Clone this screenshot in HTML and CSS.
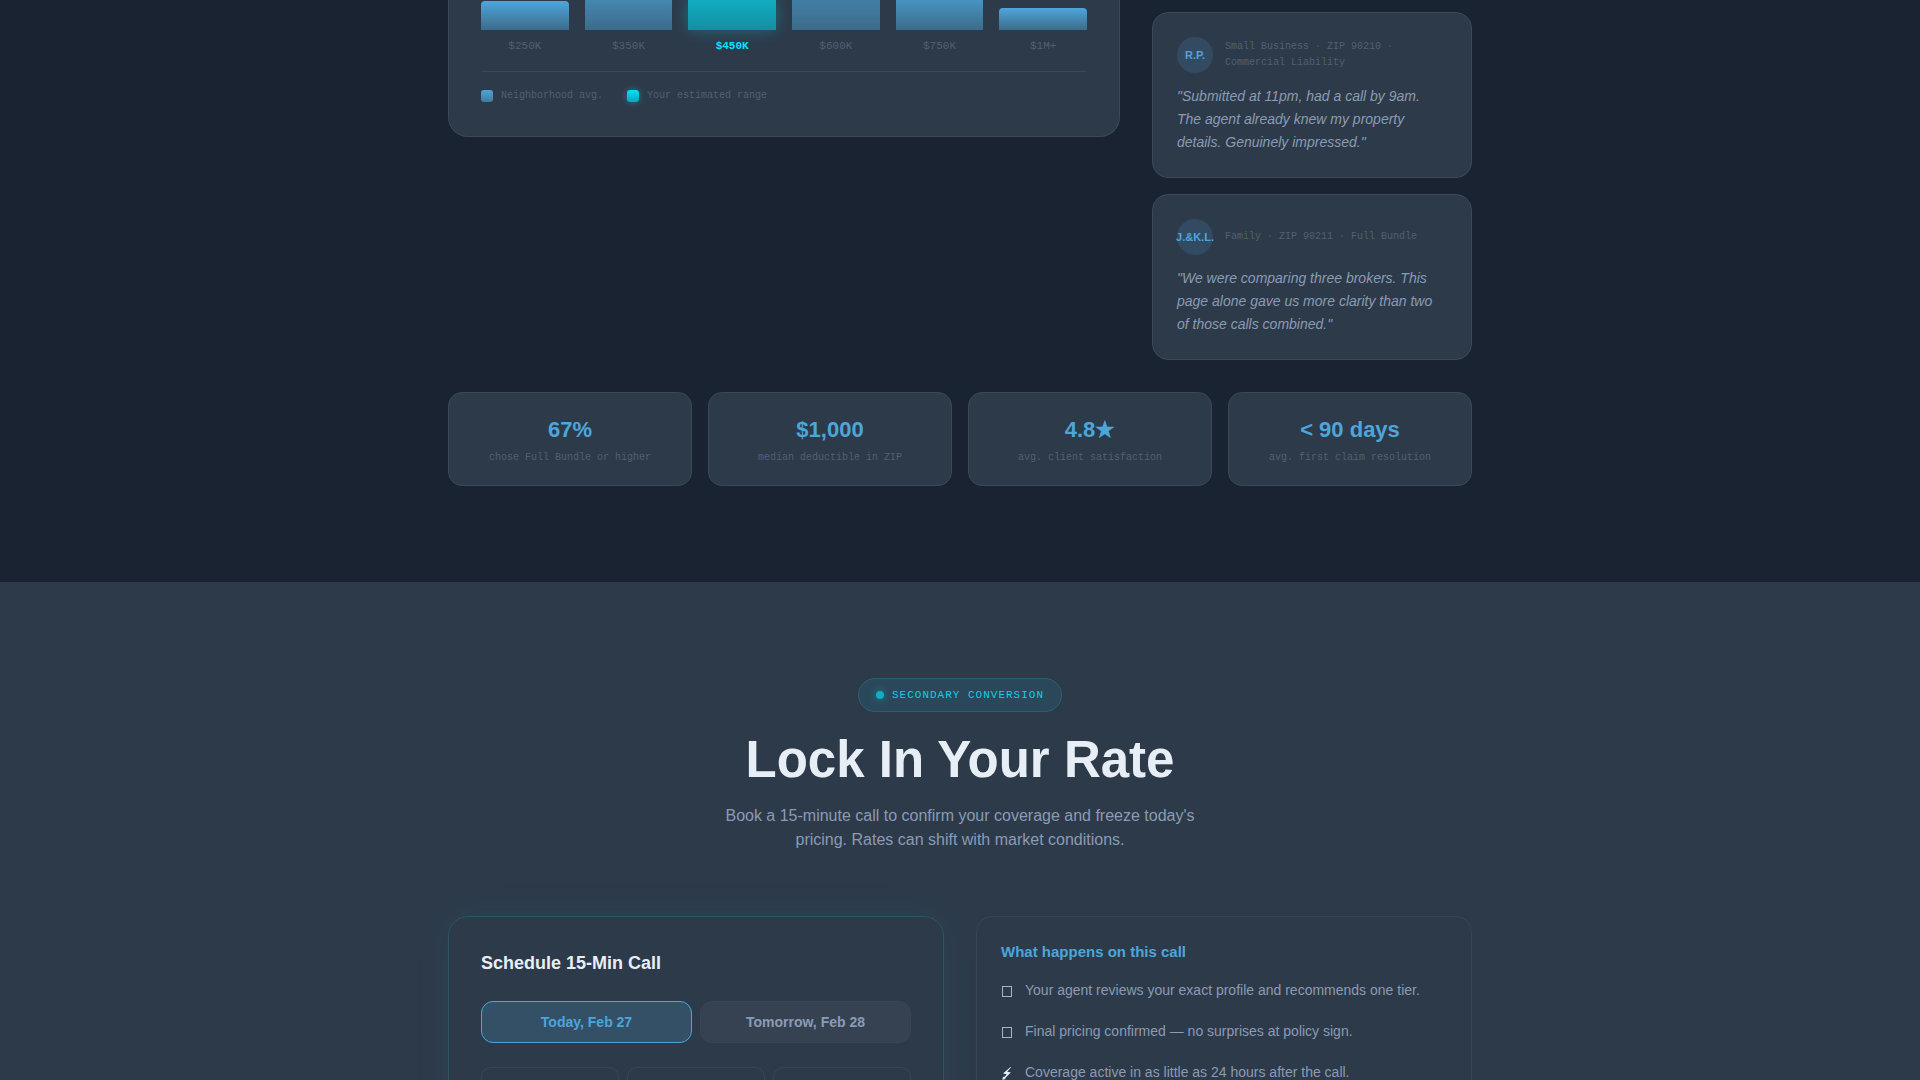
FILE: index.html
```html
<!DOCTYPE html>
<html lang="en">
<head>
<meta charset="utf-8">
<meta name="viewport" content="width=device-width, initial-scale=1">
<title>Lock In Your Rate</title>
<link rel="stylesheet" href="styles.css">
</head>
<body>
<section class="insights">
  <div class="container">
    <div class="insights-grid">
      <div class="chart-card">
        <div class="chart">
          <div class="bar-col"><div class="bar" style="height:29px"></div><span class="bar-label">$250K</span></div>
          <div class="bar-col"><div class="bar bar-tall bar-350"></div><span class="bar-label">$350K</span></div>
          <div class="bar-col"><div class="bar bar-tall bar-active"></div><span class="bar-label bar-label-active">$450K</span></div>
          <div class="bar-col"><div class="bar bar-tall bar-600"></div><span class="bar-label">$600K</span></div>
          <div class="bar-col"><div class="bar bar-tall bar-750"></div><span class="bar-label">$750K</span></div>
          <div class="bar-col"><div class="bar" style="height:22px"></div><span class="bar-label">$1M+</span></div>
        </div>
        <div class="legend">
          <span class="legend-item"><span class="swatch"></span>Neighborhood avg.</span>
          <span class="legend-item"><span class="swatch swatch-active"></span>Your estimated range</span>
        </div>
      </div>
      <div class="testimonials">
        <article class="testimonial">
          <header class="person">
            <span class="avatar">R.P.</span>
            <span class="meta">Small Business · ZIP 90210 · Commercial Liability</span>
          </header>
          <p class="quote">"Submitted at 11pm, had a call by 9am. The agent already knew my property details. Genuinely impressed."</p>
        </article>
        <article class="testimonial">
          <header class="person">
            <span class="avatar">J.&amp;K.L.</span>
            <span class="meta">Family · ZIP 90211 · Full Bundle</span>
          </header>
          <p class="quote">"We were comparing three brokers. This page alone gave us more clarity than two of those calls combined."</p>
        </article>
      </div>
    </div>
    <div class="stats">
      <div class="stat"><div class="stat-value">67%</div><div class="stat-label">chose Full Bundle or higher</div></div>
      <div class="stat"><div class="stat-value">$1,000</div><div class="stat-label">median deductible in ZIP</div></div>
      <div class="stat"><div class="stat-value">4.8★</div><div class="stat-label">avg. client satisfaction</div></div>
      <div class="stat"><div class="stat-value">&lt; 90 days</div><div class="stat-label">avg. first claim resolution</div></div>
    </div>
  </div>
</section>
<section class="booking">
  <div class="container">
    <div class="intro">
      <div class="badge"><span class="dot"></span>SECONDARY CONVERSION</div>
      <h1 class="title">Lock In Your Rate</h1>
      <p class="subtitle">Book a 15-minute call to confirm your coverage and freeze today's pricing. Rates can shift with market conditions.</p>
    </div>
    <div class="booking-grid">
      <div class="schedule">
        <h2 class="schedule-title">Schedule 15-Min Call</h2>
        <div class="days">
          <button type="button" class="day day-active">Today, Feb 27</button>
          <button type="button" class="day">Tomorrow, Feb 28</button>
        </div>
        <div class="slots">
          <button type="button" class="slot"></button>
          <button type="button" class="slot"></button>
          <button type="button" class="slot"></button>
        </div>
      </div>
      <div class="agenda">
        <h3 class="agenda-title">What happens on this call</h3>
        <ul class="agenda-list">
          <li class="agenda-item">
            <svg class="agenda-icon" viewBox="0 0 12 25" aria-hidden="true"><rect x="1.5" y="7.5" width="9" height="10" fill="none" stroke="currentColor"/></svg>
            <span>Your agent reviews your exact profile and recommends one tier.</span>
          </li>
          <li class="agenda-item">
            <svg class="agenda-icon" viewBox="0 0 12 25" aria-hidden="true"><rect x="1.5" y="7.5" width="9" height="10" fill="none" stroke="currentColor"/></svg>
            <span>Final pricing confirmed — no surprises at policy sign.</span>
          </li>
          <li class="agenda-item">
            <svg class="agenda-icon agenda-icon-bolt" viewBox="0 0 12 25" aria-hidden="true"><path d="M9.5 6L2 12.4L5.8 13.2L3 16.2L2.2 15.4L1.2 18.8L4.8 18L4 17.2L9.8 11.6L6.2 10.8L10 6.6Z" fill="currentColor"/></svg>
            <span>Coverage active in as little as 24 hours after the call.</span>
          </li>
        </ul>
      </div>
    </div>
  </div>
</section>
</body>
</html>
```
FILE: styles.css
```css
* { box-sizing: border-box; margin: 0; padding: 0; }

:root {
  --navy: #1a2332;
  --slate: #2d3a4a;
  --line: #3b4858;
  --blue: #4da6d9;
  --cyan: #00e5ff;
  --muted: #8b9bb4;
  --dim: #506072;
  --text: #e8eef6;
  --mono: "Liberation Mono", monospace;
}

body {
  height: 100vh;
  overflow: hidden;
  background: var(--slate);
  color: var(--text);
  font-family: "Liberation Sans", Arial, sans-serif;
  font-size: 16px;
}

.container { max-width: 1024px; margin: 0 auto; }

.insights { background: var(--navy); padding-bottom: 96px; }
.insights-grid {
  display: grid;
  grid-template-columns: minmax(0, 1fr) 320px;
  gap: 32px;
  align-items: start;
}

.chart-card {
  background: var(--slate);
  border: 1px solid var(--line);
  border-top: 0;
  border-radius: 0 0 20px 20px;
  padding: 0 32px 32px;
}
.chart { display: flex; align-items: flex-end; gap: 16px; }
.bar-col { flex: 1; display: flex; flex-direction: column; gap: 8px; text-align: center; }
.bar {
  border-radius: 4px 4px 0 0;
  background: linear-gradient(to bottom, #4da6dc, #3d6b8a);
}
.bar-tall { height: 30px; border-radius: 0; }
.bar-350 { background: linear-gradient(to bottom, #4488b0, #3d6b8a); }
.bar-600 { background: linear-gradient(to bottom, #417fa5, #3d6b8a); }
.bar-750 { background: linear-gradient(to bottom, #4694c2, #3d6b8a); }
.bar-active {
  background: linear-gradient(to bottom, #11adc2, #158fa2);
  box-shadow: 0 0 16px rgba(0, 229, 255, 0.3);
}
.bar-label { font: 11px/16px var(--mono); color: var(--dim); }
.bar-label-active { color: var(--cyan); font-weight: 700; }

.legend {
  display: flex;
  gap: 24px;
  margin-top: 17px;
  padding-top: 16px;
  border-top: 1px solid var(--line);
}
.legend-item {
  display: flex;
  align-items: center;
  gap: 8px;
  font: 10px/16px var(--mono);
  color: var(--dim);
}
.swatch {
  width: 12px;
  height: 12px;
  border-radius: 3px;
  background: linear-gradient(to bottom, #4da6dc, #43799d);
}
.swatch-active {
  background: linear-gradient(to bottom, #00e0fa, #10a5ba);
  box-shadow: 0 0 6px rgba(0, 229, 255, 0.4);
}

.testimonials { display: flex; flex-direction: column; gap: 16px; padding-top: 12px; }
.testimonial {
  background: var(--slate);
  border: 1px solid var(--line);
  border-radius: 16px;
  padding: 24px 24px 23px;
}
.person { display: flex; align-items: center; gap: 12px; margin-bottom: 12px; }
.avatar {
  flex: none;
  display: flex;
  align-items: center;
  justify-content: center;
  width: 36px;
  height: 36px;
  border-radius: 50%;
  background: #324b62;
  color: var(--blue);
  font-size: 11px;
  font-weight: 700;
}
.meta { font: 10px/16px var(--mono); color: var(--dim); }
.quote { font-size: 14px; line-height: 23px; font-style: italic; color: var(--muted); }

.stats {
  display: grid;
  grid-template-columns: repeat(4, 1fr);
  gap: 16px;
  margin-top: 32px;
}
.stat {
  background: var(--slate);
  border: 1px solid var(--line);
  border-radius: 14px;
  padding: 21px 20px 19px;
  text-align: center;
}
.stat-value { font-size: 22px; line-height: 32px; font-weight: 700; color: var(--blue); }
.stat-label { margin-top: 4px; font: 10px/16px var(--mono); color: var(--dim); }

.booking { padding: 96px 0; }
.intro {
  display: flex;
  flex-direction: column;
  align-items: center;
  text-align: center;
  margin-bottom: 64px;
}
.badge {
  display: flex;
  align-items: center;
  gap: 8px;
  padding: 8px 17px;
  border: 1px solid #296070;
  border-radius: 17px;
  background: #2a4859;
  color: #10cfe6;
  font: 11px/16px var(--mono);
  letter-spacing: 1px;
}
.dot {
  width: 8px;
  height: 8px;
  border-radius: 50%;
  background: #12afc4;
  box-shadow: 0 0 8px rgba(0, 229, 255, 0.4);
}
.title { margin: 18px 0 14px; font-size: 51px; line-height: 60px; font-weight: 700; }
.subtitle { max-width: 480px; font-size: 16px; line-height: 24px; color: var(--muted); }

.booking-grid { display: grid; grid-template-columns: 1fr 1fr; gap: 32px; }
.schedule {
  border: 1px solid #2b5564;
  border-radius: 20px;
  padding: 32px;
  background: var(--slate);
  box-shadow: 0 0 40px rgba(0, 229, 255, 0.06);
}
.schedule-title { font-size: 18px; line-height: 28px; margin-bottom: 24px; }
.days { display: flex; gap: 8px; margin-bottom: 24px; }
.day {
  flex: 1;
  padding: 12px;
  border: 1px solid #384555;
  border-radius: 12px;
  background: #364252;
  color: var(--muted);
  font: 700 14px/16px "Liberation Sans", Arial, sans-serif;
}
.day-active { border-color: var(--blue); background: #345067; color: var(--blue); }
.slots { display: grid; grid-template-columns: repeat(3, 1fr); gap: 8px; }
.slot {
  padding: 20px;
  border: 1px solid #384656;
  border-radius: 10px;
  background: transparent;
}

.agenda { border: 1px solid #384656; border-radius: 16px; padding: 24px; }
.agenda-title { font-size: 15px; line-height: 22px; color: var(--blue); margin-bottom: 16px; }
.agenda-list { display: flex; flex-direction: column; gap: 16px; list-style: none; }
.agenda-item {
  display: flex;
  gap: 12px;
  font-size: 14px;
  line-height: 23px;
  color: var(--muted);
}
.agenda-icon { flex: none; width: 12px; height: 25px; color: #aab6c6; }
.agenda-icon-bolt { color: var(--text); }
```
